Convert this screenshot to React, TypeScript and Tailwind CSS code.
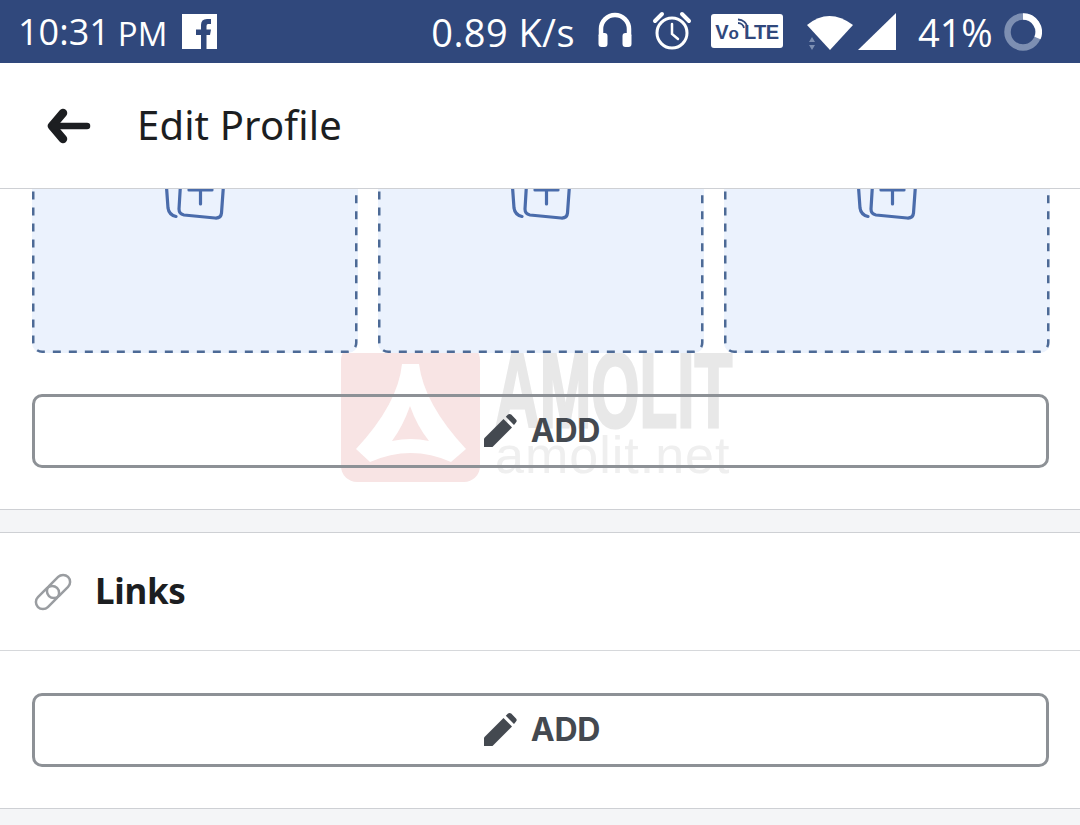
import React from "react";

const Pencil = () => (
  <svg width="36" height="36" viewBox="0 0 36 36" className="shrink-0">
    <path d="M2 25.5 L21.5 6 L30 14.5 L10.5 34 L2 34 Z" fill="#444950" />
    <path d="M23.8 3.7 L26 1.6 Q27.6 0.2 29.2 1.6 L34 6.4 Q35.4 8 34 9.6 L32 12 Z" fill="#444950" />
  </svg>
);

const AddButton = () => (
  <button className="h-[74px] w-full rounded-[10px] border-[3px] border-[#8d9196] bg-transparent flex items-center justify-center gap-[13px] pl-[1px]">
    <Pencil />
    <span className="text-[32px] font-bold text-[#444950] font-['Inter',sans-serif] tracking-[-0.2px]">ADD</span>
  </button>
);

const PhotoIcon = () => (
  <svg width="62" height="50" viewBox="0 0 62 50" fill="none" stroke="#4a6cab" strokeWidth="3.2" strokeLinecap="round" strokeLinejoin="round">
    <path d="M2 8 L4 36 Q5 43 12 44.500" />
    <path d="M17 4 L15 37 Q15 42 20 43 L51 46 Q57 46.500 57.500 41 L60 6 Q60 2 55 1" />
    <path d="M25 18 H48 M36.500 6 V32" />
  </svg>
);

const Tile = () => (
  <div className="relative h-[201px] flex-1 rounded-[10px] bg-[#ebf2fd] flex justify-center pt-[20px]">
    <PhotoIcon />
    <svg className="absolute inset-0 w-full h-full" fill="none">
      <rect x="1.250" y="1.250" width="323" height="198.500" rx="9" stroke="#4d6a96" strokeWidth="2.500" strokeDasharray="8 8" />
    </svg>
  </div>
);

const Watermark = () => (
  <div className="absolute left-[341px] top-[344px] flex items-start gap-[15px] pointer-events-none">
    <div className="w-[139px] h-[138px] rounded-[16px] bg-[#f8e4e4] flex items-center justify-center">
      <svg width="139" height="138" viewBox="0 0 139 138">
        <path
          fillRule="evenodd"
          d="M61 20 H78 Q83 60 125 105 L110 118 Q70 100 29 118 L15 105 Q57 60 61 20 Z M69 62 Q62 82 51 97 Q70 93 88 97 Q76 82 69 62 Z"
          fill="#ffffff"
        />
      </svg>
    </div>
    <div className="relative w-[240px] h-[138px] font-['Liberation_Sans',sans-serif] text-[#e8e8e8]">
      <div className="absolute left-0 top-[-13px] origin-top-left scale-x-[0.59] text-[105px] leading-[120px] font-bold whitespace-nowrap [-webkit-text-stroke:3px_#e8e8e8]">AMOLIT</div>
      <div className="absolute left-0 top-[83px] text-[52px] leading-[56px] tracking-[1px] whitespace-nowrap text-[#efefef]">amolit.net</div>
    </div>
  </div>
);

export default function App() {
  return (
    <div className="relative h-[825px] w-[1080px] overflow-hidden bg-white flex flex-col font-['Noto_Sans',sans-serif]">
      <Watermark />

      {/* Status bar */}
      <div className="relative z-10 h-[63px] shrink-0 bg-[#30487c] flex items-center text-white pl-[18px]">
        <span className="text-[36px] leading-none font-['Open_Sans',sans-serif]">10:31</span>
        <span className="ml-[8px] mt-[3px] text-[33px] leading-none font-['Open_Sans',sans-serif]">PM</span>
        <svg width="35" height="35" viewBox="0 0 35 35" className="ml-[15px] -mt-[1px]">
          <rect width="35" height="35" fill="#fff" />
          <path d="M19 35 V21 H14 V15.500 H19 V11 Q19 5 25 5 H29 V10 H26 Q24.500 10 24.500 12 V15.500 H29 L28 21 H24.500 V35 Z" fill="#30487c" />
        </svg>
        <span className="ml-[214px] text-[38px] leading-none font-['Open_Sans',sans-serif] tracking-[0.4px]">0.89 K/s</span>
        <svg width="36" height="36" viewBox="0 0 36 36" className="ml-[22px] -mt-[4px]" fill="none" stroke="#fff" strokeWidth="4.500">
          <path d="M4 24 V17 A14 14 0 0 1 32 17 V24" />
          <rect x="2.500" y="22" width="7" height="12" rx="2" fill="#fff" strokeWidth="2" />
          <rect x="26.500" y="22" width="7" height="12" rx="2" fill="#fff" strokeWidth="2" />
        </svg>
        <svg width="40" height="40" viewBox="0 0 40 40" className="ml-[19px] -mt-[2px]" fill="none" stroke="#fff" strokeLinecap="round">
          <circle cx="20" cy="22" r="15" strokeWidth="3" />
          <path d="M20 13 V23 L26 28" strokeWidth="2.500" />
          <path d="M3 10 L10 3 M37 10 L30 3" strokeWidth="4" />
        </svg>
        <div className="relative ml-[19px] -mt-[1px] h-[34px] w-[72px] rounded-[3px] bg-white text-[#30487c] flex items-center justify-center font-['Liberation_Sans',sans-serif] font-bold text-[20px] leading-none">
          <span className="mt-[2px]">V</span>
          <span className="text-[17px] mt-[4px]">o</span>
          <span className="ml-[5px] mt-[2px] tracking-[-0.5px]">LTE</span>
          <svg width="12" height="12" viewBox="0 0 12 12" className="absolute left-[25px] top-[4px]" fill="none" stroke="#30487c" strokeWidth="1.800">
            <path d="M2 5 A6 6 0 0 1 8 10 M2 1.500 A9.500 9.500 0 0 1 11.500 10" />
          </svg>
        </div>
        <div className="relative ml-[24px] mt-[1px] w-[46px] h-[36px]">
          <svg width="46" height="36" viewBox="0 0 46 36">
            <path d="M0 11 Q22 -7 46 11 L23 36 Z" fill="#fff" />
          </svg>
          <svg width="8" height="16" viewBox="0 0 8 16" className="absolute left-[1px] top-[22px]" fill="#7d8fb2">
            <path d="M4 1 L7 6 H1 Z M1 9 H7 L4 14 Z" />
          </svg>
        </div>
        <svg width="38" height="37" viewBox="0 0 38 37" className="ml-[5px]">
          <path d="M38 0 V37 H0 Z" fill="#fff" />
        </svg>
        <span className="ml-[22px] text-[38px] leading-none font-['Open_Sans',sans-serif]">41%</span>
        <svg width="38" height="38" viewBox="0 0 38 38" className="ml-[11px]" fill="none" strokeWidth="6.500">
          <circle cx="19" cy="19" r="15.500" stroke="#7d8fb2" />
          <path d="M19 3.500 A15.500 15.500 0 0 1 33.500 25" stroke="#fff" />
        </svg>
      </div>

      {/* Header */}
      <div className="relative z-10 h-[126px] shrink-0 bg-white border-b border-[#ced0d4] flex items-center pl-[46px]">
        <svg width="46" height="36" viewBox="0 0 46 36" fill="none" stroke="#1c1e21" strokeLinecap="round" strokeLinejoin="round">
          <path d="M17 5 L6 18 L17 31" strokeWidth="8.500" />
          <path d="M8 18 H41" strokeWidth="6.500" />
        </svg>
        <span className="ml-[45px] text-[40px] leading-none text-[#1c1e21] -mt-[2px] tracking-[0.15px]">Edit Profile</span>
      </div>

      {/* Body */}
      <div className="relative flex-1 min-h-0 overflow-hidden flex flex-col">
        <div className="px-[32px] pb-[41px] -mt-[37px] border-b border-[#ced0d4]">
          <div className="flex gap-[20px] w-[1018px] bg-white">
            <Tile />
            <Tile />
            <Tile />
          </div>
          <div className="mt-[41px] w-[1017px]">
            <AddButton />
          </div>
        </div>
        <div className="h-[23px] shrink-0 bg-[#f4f5f7] border-b border-[#ced0d4]" />
        <div className="h-[118px] shrink-0 border-b border-[#d6d8db] flex items-center pl-[33px]">
          <svg width="40" height="40" viewBox="0 0 40 40" fill="none" stroke="#9a9da1" strokeWidth="2.500">
            <rect x="12" y="7.500" width="27" height="14" rx="7" transform="rotate(-45 25.500 14.500)" />
            <rect x="1" y="18.500" width="27" height="14" rx="7" transform="rotate(-45 14.500 25.500)" />
          </svg>
          <span className="ml-[22px] text-[35px] leading-none font-bold text-[#1c1e21] -mt-[2px] tracking-[-0.3px]">Links</span>
        </div>
        <div className="px-[32px] pt-[42px] pb-[41px] border-b border-[#ced0d4]">
          <div className="w-[1017px]">
            <AddButton />
          </div>
        </div>
        <div className="flex-1 bg-[#f4f5f7]" />
      </div>
    </div>
  );
}
